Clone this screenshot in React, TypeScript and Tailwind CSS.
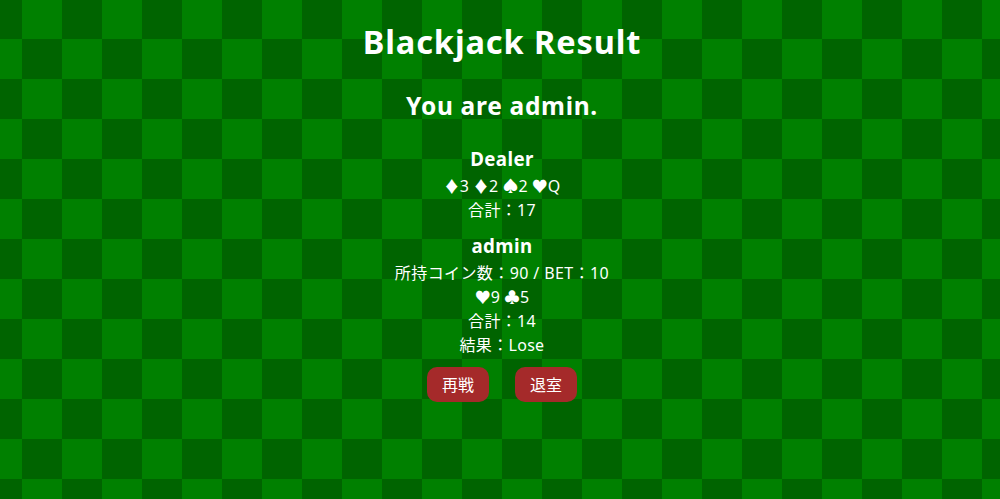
const dealerCards = ['♦3', '♦2', '♠2', '♥Q'];
const playerCards = ['♥9', '♣5'];

export default function App() {
  return (
    <div className="min-h-screen bg-[image:repeating-conic-gradient(#006400_0_25%,#008000_0_50%)] bg-size-[80px_80px] bg-position-[22px_-1px] text-white text-center font-['Noto_Sans','Noto_Sans_CJK_JP',sans-serif]">
      <div className="pt-[22px] pl-[4px] flex flex-col items-center">
        <h1 className="text-[32.5px] leading-[40px] font-bold tracking-[0.9px]">Blackjack Result</h1>
        <h2 className="mt-[28px] text-[24.5px] leading-[32px] font-bold tracking-[0.7px]">You are admin.</h2>

        {/* Dealer */}
        <div className="mt-[24px]">
          <h3 className="text-[18.7px] leading-[26px] font-bold tracking-[0.4px]">Dealer</h3>
          <p className="mt-[2px] text-[16px] leading-[24px]">{dealerCards.join(' ')}</p>
          <p className="text-[16px] leading-[24px] tracking-[0.3px]">合計：17</p>
        </div>

        {/* Player */}
        <div className="mt-[11px]">
          <h3 className="text-[18.7px] leading-[26px] font-bold tracking-[0.4px]">admin</h3>
          <p className="mt-[2px] text-[16px] leading-[24px] tracking-[0.4px]">所持コイン数：90 / BET：10</p>
          <p className="text-[16px] leading-[24px]">{playerCards.join(' ')}</p>
          <p className="text-[16px] leading-[24px] tracking-[0.3px]">合計：14</p>
          <p className="text-[16px] leading-[24px] tracking-[0.3px]">結果：Lose</p>
        </div>

        <div className="mt-[10px] flex gap-[26px]">
          <button className="w-[62px] h-[35px] rounded-[10px] bg-[#a52a2a] text-[16px] text-white">再戦</button>
          <button className="w-[62px] h-[35px] rounded-[10px] bg-[#a52a2a] text-[16px] text-white">退室</button>
        </div>
      </div>
    </div>
  );
}
